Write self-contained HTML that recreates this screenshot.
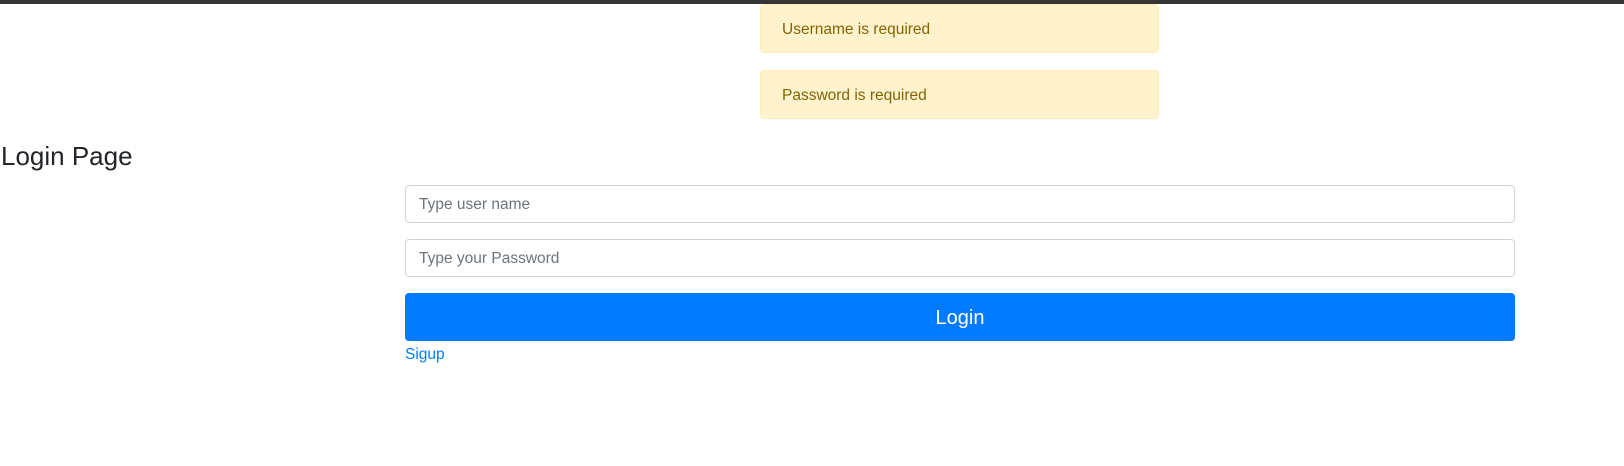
<!DOCTYPE html>
<html><head><style>
body{margin:0;width:1624px;height:466px;background:#fff;font-family:"Liberation Sans",sans-serif;position:relative;overflow:hidden}
.bar{position:absolute;left:0;top:0;width:1624px;height:4px;background:#343434}
.alert{position:absolute;left:760px;width:399px;height:49px;background:#fff3cd;border:1px solid #ffeeba;border-radius:4px;box-sizing:border-box;color:#856404;font-size:15.5px;line-height:49px;padding-left:21px}
h1{position:absolute;left:1px;top:141px;margin:0;font-weight:400;font-size:26px;color:#212529}
.in{position:absolute;left:405px;width:1110px;height:38px;border:1px solid #ced4da;border-radius:4px;box-sizing:border-box;color:#6c757d;font-size:15.5px;line-height:38px;padding-left:13px}
.btn{position:absolute;left:405px;top:293px;width:1110px;height:48px;background:#007bff;border-radius:4px;color:#fff;font-size:20px;text-align:center;line-height:50px}
.link{position:absolute;left:405px;top:346px;color:#007bff;font-size:15.5px}
</style></head><body>
<div class="bar"></div>
<div class="alert" style="top:4px">Username is required</div>
<div class="alert" style="top:70px">Password is required</div>
<h1>Login Page</h1>
<div class="in" style="top:185px">Type user name</div>
<div class="in" style="top:239px">Type your Password</div>
<div class="btn">Login</div>
<div class="link">Sigup</div>
</body></html>
